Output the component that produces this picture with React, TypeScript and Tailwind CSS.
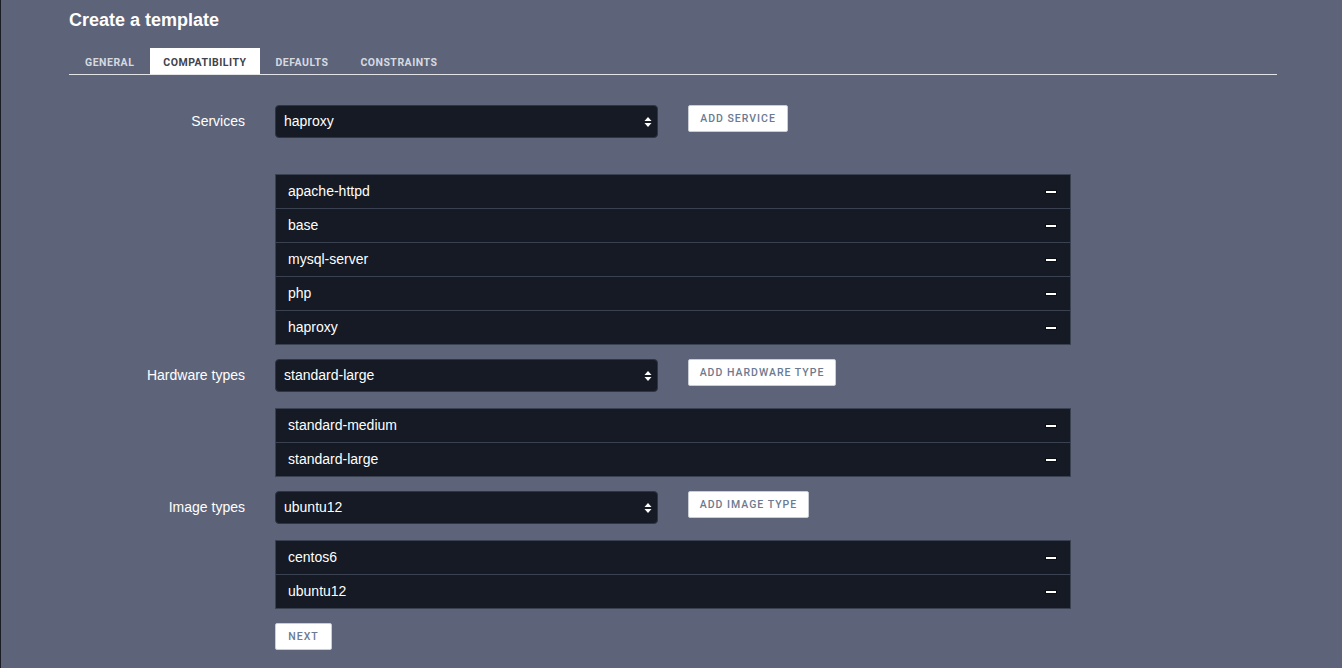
import React from "react";

const font = { fontFamily: '"Liberation Sans", Arial, sans-serif' };

function Minus() {
  return <div className="w-[12px] h-[4px] bg-white border border-[#0b0e14]" />;
}

function Select({ value }: { value: string }) {
  return (
    <div className="w-[383px] h-[33px] bg-[#151a24] border border-[#2f3544] rounded-[4px] flex items-center justify-between pl-[8px] pr-[5px]">
      <span className="text-[14px] text-white">{value}</span>
      <svg width="8" height="12" viewBox="0 0 8 12">
        <path d="M4 1 L7.5 5 L0.5 5 Z" fill="#fff" />
        <path d="M4 11 L7.5 7 L0.5 7 Z" fill="#fff" />
      </svg>
    </div>
  );
}

function Btn({ label, w }: { label: string; w: string }) {
  return (
    <div
      className={`${w} h-[27px] bg-white border border-[#c9cdd4] rounded-[2px] flex items-center justify-center text-[10.5px] font-medium tracking-[1px] text-[#6b7a90]`}
      style={{ fontFamily: "Roboto, sans-serif" }}
    >
      {label}
    </div>
  );
}

function List({ items }: { items: string[] }) {
  return (
    <div className="w-[796px] bg-[#3a4151] p-px flex flex-col gap-px">
      {items.map((it) => (
        <div key={it} className="h-[33px] bg-[#151a24] flex items-center justify-between pl-[12px] pr-[13px]">
          <span className="text-[14px] text-white">{it}</span>
          <Minus />
        </div>
      ))}
    </div>
  );
}

function Row({ label, children }: { label: string; children: React.ReactNode }) {
  return (
    <div className="flex items-start">
      <div className="w-[176px] h-[33px] flex items-center justify-end text-[14px] text-white">{label}</div>
      <div className="ml-[30px]">{children}</div>
    </div>
  );
}

export default function App() {
  const tabs = ["GENERAL", "COMPATIBILITY", "DEFAULTS", "CONSTRAINTS"];
  return (
    <div className="w-[1342px] h-[668px] bg-[#5d6479] border-l border-[#1a1d24] overflow-hidden" style={font}>
      <div className="pl-[68px] w-[1276px]">
        <div className="pt-[7px] h-[48px] text-[18px] font-bold text-white">Create a template</div>
        <div className="flex h-[27px] border-b border-[#e3e4e8]" style={{ fontFamily: "Roboto, sans-serif" }}>
          {tabs.map((t) => (
            <div
              key={t}
              className={`h-[26px] flex items-center pt-[3px] text-[10.5px] font-bold tracking-[0.5px] ${
                t === "COMPATIBILITY" ? "bg-white text-[#3f434d] px-[13px]" : "text-[#d6d9e0] px-[16px]"
              }`}
            >
              {t}
            </div>
          ))}
        </div>

        <div className="mt-[30px]">
          <Row label="Services">
            <div className="flex items-start gap-[30px]">
              <Select value="haproxy" />
              <Btn label="ADD SERVICE" w="w-[100px]" />
            </div>
          </Row>
          <div className="ml-[206px] mt-[36px]">
            <List items={["apache-httpd", "base", "mysql-server", "php", "haproxy"]} />
          </div>

          <div className="mt-[14px]">
            <Row label="Hardware types">
              <div className="flex items-start gap-[30px]">
                <Select value="standard-large" />
                <Btn label="ADD HARDWARE TYPE" w="w-[148px]" />
              </div>
            </Row>
          </div>
          <div className="ml-[206px] mt-[16px]">
            <List items={["standard-medium", "standard-large"]} />
          </div>

          <div className="mt-[14px]">
            <Row label="Image types">
              <div className="flex items-start gap-[30px]">
                <Select value="ubuntu12" />
                <Btn label="ADD IMAGE TYPE" w="w-[121px]" />
              </div>
            </Row>
          </div>
          <div className="ml-[206px] mt-[16px]">
            <List items={["centos6", "ubuntu12"]} />
          </div>

          <div className="ml-[206px] mt-[14px]">
            <Btn label="NEXT" w="w-[57px]" />
          </div>
        </div>
      </div>
    </div>
  );
}
